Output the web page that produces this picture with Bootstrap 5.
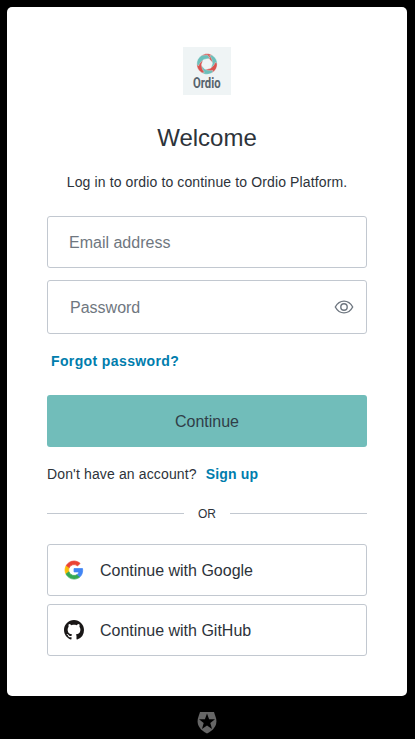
<!DOCTYPE html>
<html lang="en">
<head>
<meta charset="utf-8">
<meta name="viewport" content="width=device-width, initial-scale=1">
<title>Log in | Ordio Platform</title>
<link href="https://cdn.jsdelivr.net/npm/bootstrap@5.3.0/dist/css/bootstrap.min.css" rel="stylesheet">
<style>
body { font-family: "Liberation Sans", Arial, sans-serif; font-size: 14px; line-height: 20px; color: #2d333a; background: #000; overflow: hidden; }
.page { padding: 7px 8px 0 7px; }
.panel { width: 400px; height: 689px; border-radius: 5px; padding: 40px; }
.title { font-size: 24px; line-height: 29px; margin: 28px 0 20px; font-weight: 400; }
.intro { margin-bottom: 24px; letter-spacing: .125px; }
.field { height: 52px; font-size: 16px; border: 1px solid #c2c8d0; border-radius: 3px; padding: 2px 21px 0; color: #2d333a; }
.field::placeholder { color: #6f7780; opacity: 1; }
.pw-group { height: 54px; border: 1px solid #c2c8d0; border-radius: 3px; margin-top: 12px; }
.pw-group .field { border: 0; padding: 2px 0 0 22px; }
.eye { width: 44px; color: #6f7780; }
.blue { color: #007dad; font-weight: 700; text-decoration: none; }
.forgot { margin: 17px 0 24px 4px; letter-spacing: .38px; }
.go { height: 52px; font-size: 16px; background: #71bdba; color: #303e48; border: 0; border-radius: 3px; padding: 2px 0 0; }
.signup { margin-top: 17px; letter-spacing: .14px; }
.signup .blue { padding-left: 1px; }
.or { font-size: 12px; line-height: 14px; margin: 22px 0 24px; gap: 14px; }
.or .word { padding-top: 1px; margin-bottom: -1px; }
.or .rule { height: 1px; background: #c2c8d0; }
.social { height: 52px; font-size: 16px; border: 1px solid #c2c8d0; border-radius: 3px; padding: 0 0 0 16px; color: #2d333a; }
.social svg { margin-right: 16px; }
.social span { padding-top: 2px; }
.foot { padding-top: 15px; }
svg text { font-family: Roboto, sans-serif; font-weight: 700; }
</style>
</head>
<body>
<div class="page">
<main class="panel bg-white">
  <div class="d-flex justify-content-center">
    <svg width="48" height="48" viewBox="0 0 48 48" role="img" aria-label="Ordio">
      <rect width="48" height="48" fill="#eff4f5"/>
      <defs><path id="blade" d="M-5.2-8.6C-2.5-10.6 1.8-10.8 4.8-8.9L8.1-4.2 6.6-.3 2.4-5C0-6.2-2.8-7-6-6.4Z"/></defs>
      <g transform="translate(24 17)" stroke="#eff4f5" stroke-width=".3">
        <use href="#blade" fill="#d9534f"/>
        <use href="#blade" fill="#6bbfba" transform="rotate(60)"/>
        <use href="#blade" fill="#d9534f" transform="rotate(120)"/>
        <use href="#blade" fill="#6bbfba" transform="rotate(180)"/>
        <use href="#blade" fill="#d9534f" transform="rotate(240)"/>
        <use href="#blade" fill="#6bbfba" transform="rotate(300)"/>
      </g>
      <text x="10" y="41" font-size="15.2" textLength="27.5" lengthAdjust="spacingAndGlyphs" fill="#58646d">Ordio</text>
    </svg>
  </div>
  <h1 class="title text-center">Welcome</h1>
  <p class="intro text-center">Log in to ordio to continue to Ordio Platform.</p>
  <form>
    <input class="form-control field" type="email" placeholder="Email address" aria-label="Email address">
    <div class="pw-group d-flex align-items-center">
      <input class="form-control field bg-transparent" type="password" placeholder="Password" aria-label="Password">
      <span class="eye d-flex justify-content-center flex-shrink-0">
        <svg width="20" height="20" viewBox="0 0 20 20" fill="none" stroke="currentColor" stroke-width="1.4"><path d="M1.3 10C3.3 6.3 6.3 4.1 10 4.1s6.7 2.2 8.7 5.9c-2 3.7-5 5.9-8.7 5.9S3.3 13.7 1.3 10Z"/><circle cx="10" cy="10" r="3.2"/></svg>
      </span>
    </div>
    <p class="forgot"><a class="blue" href="#">Forgot password?</a></p>
    <button class="btn go w-100" type="button">Continue</button>
  </form>
  <p class="signup mb-0">Don't have an account? <a class="blue ms-1" href="#">Sign up</a></p>
  <div class="or d-flex align-items-center"><span class="rule flex-fill"></span><span class="word">OR</span><span class="rule flex-fill"></span></div>
  <div class="d-grid gap-2">
    <button class="btn social d-flex align-items-center" type="button">
      <svg width="20" height="20" viewBox="0 0 48 48"><g transform="translate(2.5 2.5) scale(.9)" stroke-width="2"><path fill="#EA4335" stroke="#EA4335" d="M24 9.5c3.54 0 6.71 1.22 9.21 3.6l6.85-6.85C35.9 2.38 30.47 0 24 0 14.62 0 6.51 5.38 2.56 13.22l7.98 6.19C12.43 13.72 17.74 9.5 24 9.5z"/><path fill="#FBBC05" stroke="#FBBC05" d="M10.53 28.59c-.48-1.45-.76-2.99-.76-4.59s.27-3.14.76-4.59l-7.98-6.19C.92 16.46 0 20.12 0 24c0 3.88.92 7.54 2.56 10.78l7.97-6.19z"/><path fill="#34A853" stroke="#34A853" d="M24 48c6.48 0 11.93-2.13 15.89-5.81l-7.73-6c-2.15 1.45-4.92 2.3-8.16 2.3-6.26 0-11.57-4.22-13.47-9.91l-7.98 6.19C6.51 42.62 14.62 48 24 48z"/><path fill="#4285F4" stroke="#4285F4" d="M46.98 24.55c0-1.57-.15-3.09-.38-4.55H24v9.02h12.94c-.58 2.96-2.26 5.48-4.78 7.18l7.73 6c4.51-4.18 7.09-10.36 7.09-17.65z"/></g></svg>
      <span>Continue with Google</span>
    </button>
    <button class="btn social d-flex align-items-center" type="button">
      <svg width="20" height="20" viewBox="0 0 16 16" fill="#191717"><path d="M8 0C3.58 0 0 3.58 0 8c0 3.54 2.29 6.53 5.47 7.59.4.07.55-.17.55-.38 0-.19-.01-.82-.01-1.49-2.01.37-2.53-.49-2.69-.94-.09-.23-.48-.94-.82-1.13-.28-.15-.68-.52-.01-.53.63-.01 1.08.58 1.23.82.72 1.21 1.87.87 2.33.66.07-.52.28-.87.51-1.07-1.78-.2-3.64-.89-3.64-3.95 0-.87.31-1.59.82-2.15-.08-.2-.36-1.02.08-2.12 0 0 .67-.21 2.2.82.64-.18 1.32-.27 2-.27s1.36.09 2 .27c1.53-1.04 2.2-.82 2.2-.82.44 1.1.16 1.92.08 2.12.51.56.82 1.27.82 2.15 0 3.07-1.87 3.75-3.65 3.95.29.25.54.73.54 1.48 0 1.07-.01 1.93-.01 2.2 0 .21.15.46.55.38A8.01 8.01 0 0 0 16 8c0-4.42-3.58-8-8-8z"/></svg>
      <span>Continue with GitHub</span>
    </button>
  </div>
</main>
<footer class="foot d-flex justify-content-center">
  <svg width="20" height="23" viewBox="0 0 20 23"><path fill="#666" d="M3 1h14l2.1 6.6C20.3 13.2 18 18.6 10 22.6 2 18.6-.3 13.2.9 7.6Z"/><path fill="#000" d="M10 2.5l2.1 5.8H18l-4.7 3.8 1.7 5.9-5-3.5L5 18l1.7-5.9L2 8.3h5.9z"/></svg>
</footer>
</div>
<script src="https://cdn.jsdelivr.net/npm/bootstrap@5.3.0/dist/js/bootstrap.bundle.min.js"></script>
</body>
</html>
